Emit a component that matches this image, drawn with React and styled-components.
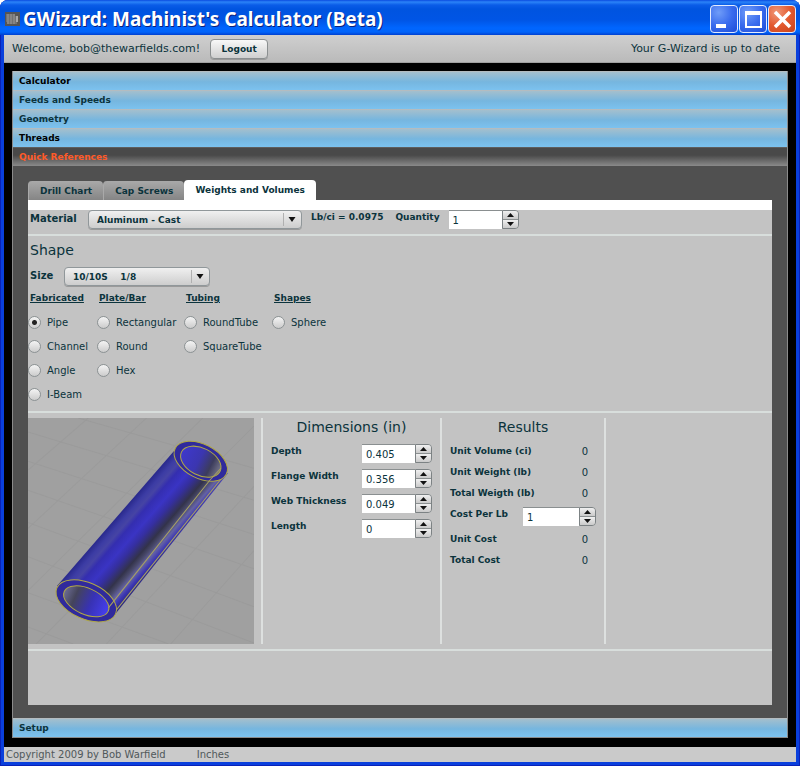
import React from "react";
import styled, { createGlobalStyle } from "styled-components";

const INK = "#0b333c";

const GlobalStyle = createGlobalStyle`
  *, *::before, *::after { box-sizing: border-box; }
  html, body { margin: 0; background: #fff; }
  body, button, input, select {
    font-family: "DejaVu Sans", Verdana, sans-serif;
    font-size: 10px;
    color: ${INK};
  }
  h2, h3, p { margin: 0; }
`;

const Window = styled.div`
  display: flex;
  flex-direction: column;
  min-height: 100vh;
  padding: 0 4px 4px;
  background: #0a3fdc;
  border-radius: 8px 8px 0 0;
  box-shadow: inset 1px 0 #0a22b8, inset -1px -1px #0a22b8;
`;

const TitleBar = styled.header`
  display: flex;
  align-items: center;
  height: 35px;
  margin: 0 -4px;
  padding: 3px 4px 0 5px;
  border-radius: 8px 8px 0 0;
  background: linear-gradient(#0a4be0 0, #2b83f8 2px, #0a5ce8 5px, #0054e0 9px, #0055e5 20px, #0066ff 28px, #0064fa 32px, #0040d0 35px);
`;

const TitleText = styled.h1`
  flex: 1;
  margin: 0 0 0 3px;
  font: bold 19px/24px "Trebuchet MS", "Noto Sans", sans-serif;
  color: #fff;
  text-shadow: 1px 1px #0a1f7c;
  white-space: nowrap;
`;

const CaptionButtons = styled.div`
  display: flex;
  gap: 1px;
`;

const CaptionButton = styled.button`
  display: flex;
  width: 28px;
  height: 28px;
  padding: 0;
  border: 1px solid #e4ecff;
  border-radius: 4px;
  background: ${(p) =>
    p.$close
      ? "radial-gradient(circle at 30% 25%, #f09878, #e35a30 50%, #c8421c)"
      : "radial-gradient(circle at 30% 25%, #6f9cf8, #3a6cee 50%, #1c4cd8)"};
  svg { display: block; width: 26px; height: 26px; }
`;

const AccountBar = styled.div`
  display: flex;
  align-items: center;
  height: 28px;
  padding: 0 16px 0 8px;
  background: linear-gradient(#cfcfcf, #bababa);
  border-bottom: 1px solid #a0a0a0;
  font-size: 11px;
`;

const LogoutButton = styled.button`
  height: 20px;
  width: 58px;
  margin-left: 10px;
  padding: 0;
  border: 1px solid #8b8f90;
  border-radius: 4px;
  background: linear-gradient(#f8f8f8, #cfcfcf);
  box-shadow: 0 1px #9a9a9a;
  font-size: 9px;
  font-weight: bold;
`;

const Status = styled.p`
  margin-left: auto;
`;

const Stage = styled.div`
  display: flex;
  flex: 1;
  padding: 8px 8px 9px;
  background: #000;
`;

const Accordion = styled.main`
  display: flex;
  flex: 1;
  flex-direction: column;
  min-width: 0;
  border: solid #8a8a8a;
  border-width: 0 1px 1px;
  background: #505050;
`;

const AccordionHeader = styled.button`
  display: block;
  width: 100%;
  height: 19px;
  padding: 0 6px;
  border: 0;
  border-top: 1px solid ${(p) => (p.$open ? "#5e5e5e" : "#b4bcc0")};
  background: ${(p) =>
    p.$open
      ? "linear-gradient(#494949 40%, #8a8a8a)"
      : "linear-gradient(#a4bfcd, #76b6df 55%, #7cc2ef)"};
  color: ${(p) => (p.$open ? "#ff5a28" : p.$strong ? "#000" : INK)};
  font-size: 9px;
  font-weight: bold;
  line-height: 18px;
  text-align: left;
`;

const AccordionBody = styled.section`
  display: flex;
  flex: 1;
  flex-direction: column;
  padding: 14px 15px 13px;
`;

const Tabs = styled.div`
  display: flex;
  align-items: flex-end;
`;

const Tab = styled.button`
  height: ${(p) => (p.$active ? 20 : 19)}px;
  padding: 0 11px;
  border: 0;
  border-left: ${(p) => (p.$active ? 0 : 1)}px solid #a9a9a9;
  border-radius: 4px 4px 0 0;
  background: ${(p) => (p.$active ? "#fff" : "linear-gradient(#a9a9a9, #858585)")};
  font-size: 9px;
  font-weight: bold;
  white-space: nowrap;
`;

const Panel = styled.div`
  flex: 1;
  border-top: 10px solid #fff;
  background: #c3c3c3;
`;

const MaterialRow = styled.div`
  display: flex;
  align-items: flex-start;
  height: 26px;
  padding-left: 2px;
  border-bottom: 2px solid #d8dedc;
`;

const BigLabel = styled.label`
  width: ${(p) => p.$width}px;
  font-size: 10px;
  font-weight: bold;
  line-height: 17px;
`;

const SmallLabel = styled.label`
  margin: ${(p) => p.$margin || 0};
  font-size: 9px;
  font-weight: bold;
  line-height: 15px;
  white-space: nowrap;
`;

const SelectBox = styled.span`
  position: relative;
  display: block;
  width: ${(p) => p.$width}px;
  height: 19px;
  svg {
    position: absolute;
    right: 0;
    top: 0;
    width: 20px;
    height: 19px;
    pointer-events: none;
  }
`;

const SelectField = styled.select`
  appearance: none;
  width: 100%;
  height: 19px;
  padding: 0 22px 0 8px;
  border: 1px solid #90979a;
  border-radius: 4px;
  background: linear-gradient(#f0f0f0, #cdcdcd);
  box-shadow: 0 1px #9a9a9a;
  font-size: 9px;
  font-weight: bold;
`;

const StepperBox = styled.span`
  display: flex;
  width: ${(p) => p.$width}px;
  height: 19px;
`;

const StepperInput = styled.input`
  flex: 1;
  min-width: 0;
  padding: 0 4px;
  border: 0;
  border-top: 1px solid #8a8f90;
  background: #fff;
`;

const StepperButtons = styled.span`
  display: flex;
  flex-direction: column;
  width: 17px;
  border: 1px solid #7c8284;
  border-radius: 0 4px 4px 0;
  overflow: hidden;
`;

const StepButton = styled.button`
  display: flex;
  flex: 1;
  align-items: center;
  justify-content: center;
  padding: 0;
  border: 0;
  background: linear-gradient(#f0f0f0, #cacaca);
  & + & { border-top: 1px solid #8a8f90; }
  svg { display: block; width: 7px; height: 4px; }
`;

const ShapeSection = styled.section`
  padding: 5px 2px 0;
  border-bottom: 2px solid #d8dedc;
`;

const SectionTitle = styled.h2`
  font-size: 14px;
  font-weight: normal;
  line-height: 18px;
`;

const SizeRow = styled.div`
  display: flex;
  padding-top: 8px;
`;

const ShapeColumns = styled.div`
  display: grid;
  grid-template-columns: 69px 87px 88px 1fr;
  padding: 5px 0;
`;

const ShapeColumn = styled.fieldset`
  min-width: 0;
  margin: 0;
  padding: 0;
  border: 0;
`;

const ShapeLegend = styled.legend`
  padding: 0 0 4px;
  font-size: 9px;
  font-weight: bold;
  line-height: 15px;
  text-decoration: underline;
`;

const ShapeOption = styled.label`
  display: flex;
  align-items: center;
  gap: 6px;
  height: 24px;
  margin-left: -2px;
  white-space: nowrap;
`;

const Radio = styled.input`
  appearance: none;
  width: 13px;
  height: 13px;
  margin: 0;
  border: 1px solid #8c9294;
  border-radius: 50%;
  background: linear-gradient(#f4f4f4, #cccccc);
  &:checked {
    background: radial-gradient(circle, #222 2px, transparent 3px), linear-gradient(#f4f4f4, #cccccc);
  }
`;

const Details = styled.div`
  display: grid;
  grid-template-columns: 233px 179px 164px 1fr;
  padding: 5px 0;
  border-bottom: 2px solid #d8dedc;
`;

const Preview = styled.figure`
  margin: 0;
  svg { display: block; width: 226px; height: 226px; }
`;

const DetailColumn = styled.section`
  display: flex;
  flex-direction: column;
  gap: 6px;
  padding: 0 8px;
  border-left: 2px solid #dde0df;
`;

const DetailTitle = styled(SectionTitle)`
  text-align: center;
  margin-bottom: 2px;
`;

const FieldRow = styled.div`
  display: flex;
  align-items: flex-start;
  justify-content: space-between;
`;

const ResultValue = styled.output`
  padding-right: 8px;
  line-height: 15px;
`;

const Footer = styled.footer`
  display: flex;
  gap: 31px;
  height: 15px;
  padding-left: 2px;
  background: #cacaca;
  color: #50585a;
  line-height: 15px;
`;

function Select({ id, value, width }) {
  return (
    <SelectBox $width={width}>
      <SelectField id={id} defaultValue={value}>
        <option>{value}</option>
      </SelectField>
      <svg viewBox="0 0 20 19" aria-hidden="true">
        <path d="M1.500 3v13" stroke="#b0b0b0" />
        <path d="M6.500 7h7l-3.500 5z" fill="#111" />
      </svg>
    </SelectBox>
  );
}

function Stepper({ id, value, width = 70 }) {
  return (
    <StepperBox $width={width}>
      <StepperInput id={id} defaultValue={value} inputMode="decimal" />
      <StepperButtons>
        <StepButton type="button" aria-label="Increase">
          <svg viewBox="0 0 7 4"><path d="M0 4l3.500-4L7 4z" fill="#111" /></svg>
        </StepButton>
        <StepButton type="button" aria-label="Decrease">
          <svg viewBox="0 0 7 4"><path d="M0 0h7L3.500 4z" fill="#111" /></svg>
        </StepButton>
      </StepperButtons>
    </StepperBox>
  );
}

function PipeDrawing() {
  return (
    <svg viewBox="0 0 225 225" role="img" aria-label="Pipe">
      <defs>
        <linearGradient id="body" gradientUnits="userSpaceOnUse" x1="29" y1="167" x2="75" y2="207">
          <stop offset="0" stopColor="#29298c" />
          <stop offset=".1" stopColor="#3c3ca4" />
          <stop offset=".18" stopColor="#4644a4" />
          <stop offset=".26" stopColor="#342eb0" />
          <stop offset=".4" stopColor="#3a34c4" />
          <stop offset=".52" stopColor="#352fa0" />
          <stop offset=".68" stopColor="#33334a" />
          <stop offset=".76" stopColor="#4a4a6c" />
          <stop offset=".84" stopColor="#6462a4" />
          <stop offset=".92" stopColor="#3c36b4" />
          <stop offset="1" stopColor="#2c2880" />
        </linearGradient>
        <linearGradient id="mouthTop">
          <stop offset="0" stopColor="#3e38cc" />
          <stop offset=".45" stopColor="#3b36b0" />
          <stop offset=".75" stopColor="#3c3c5c" />
          <stop offset="1" stopColor="#77778c" />
        </linearGradient>
        <linearGradient id="mouthBottom">
          <stop offset="0" stopColor="#6c6c94" />
          <stop offset=".25" stopColor="#44445a" />
          <stop offset=".6" stopColor="#3832b4" />
          <stop offset="1" stopColor="#463ff0" />
        </linearGradient>
      </defs>
      <rect width="225" height="225" fill="#a0a0a0" />
      <g stroke="#9b9b9b" strokeWidth="1" fill="none">
        <path d="M0 14L225 82M0 43L225 116M0 72L225 150M0 104L225 188M0 138L225 224M0 174L140 225M50 0L225 50M0 208L45 225" />
        <path d="M60 0L0 52M118 0L0 110M174 0L0 172M225 8L8 225M225 68L78 225M225 132L142 225" />
      </g>
      <path d="M29 167L146 32L199 55L88 194L60 202z" fill="url(#body)" />
      <ellipse cx="58" cy="182" rx="32" ry="18" transform="rotate(24 58 182)" fill="#302a9c" stroke="#b0a846" />
      <ellipse cx="58" cy="182.500" rx="24" ry="13" transform="rotate(24 58 182.500)" fill="url(#mouthBottom)" stroke="#b0a846" />
      <ellipse cx="172" cy="43" rx="28.500" ry="17" transform="rotate(27 172 43)" fill="#302a9c" stroke="#b0a846" />
      <ellipse cx="172" cy="43.500" rx="21.500" ry="13.500" transform="rotate(27 172 43.500)" fill="url(#mouthTop)" stroke="#b0a846" />
      <path d="M192 50L181 62L80 189M192 61L88 191" fill="none" stroke="#a8a260" />
    </svg>
  );
}

const shapeGroups = [
  { title: "Fabricated", options: ["Pipe", "Channel", "Angle", "I-Beam"] },
  { title: "Plate/Bar", options: ["Rectangular", "Round", "Hex"] },
  { title: "Tubing", options: ["RoundTube", "SquareTube"] },
  { title: "Shapes", options: ["Sphere"] },
];

const dimensions = [
  ["Depth", "0.405"],
  ["Flange Width", "0.356"],
  ["Web Thickness", "0.049"],
  ["Length", "0"],
];

function Result({ label }) {
  return (
    <FieldRow>
      <SmallLabel as="span">{label}</SmallLabel>
      <ResultValue aria-label={label}>0</ResultValue>
    </FieldRow>
  );
}

export default function App() {
  return (
    <>
      <GlobalStyle />
      <Window>
        <TitleBar>
          <svg width="15" height="14" viewBox="0 0 15 14" aria-hidden="true">
            <rect width="15" height="14" fill="#555" />
            <path d="M1 3h9M1 5h12M1 7h12M1 9h12M2 11h10M3 2v10M6 2v10M9 2v10" stroke="#aaa" strokeWidth=".7" />
            <path d="M12 4v6" stroke="#ddd" />
          </svg>
          <TitleText>GWizard: Machinist's Calculator (Beta)</TitleText>
          <CaptionButtons>
            <CaptionButton aria-label="Minimize">
              <svg viewBox="0 0 26 26"><path d="M5 18h10v4H5z" fill="#fff" /></svg>
            </CaptionButton>
            <CaptionButton aria-label="Maximize">
              <svg viewBox="0 0 26 26"><path d="M5 5h17v17H5zM7 9v11h13V9z" fill="#fff" fillRule="evenodd" /></svg>
            </CaptionButton>
            <CaptionButton $close aria-label="Close">
              <svg viewBox="0 0 26 26"><path d="M6 6l15 15M21 6L6 21" stroke="#fff" strokeWidth="3.500" /></svg>
            </CaptionButton>
          </CaptionButtons>
        </TitleBar>
        <AccountBar>
          <p>Welcome, bob@thewarfields.com!</p>
          <LogoutButton>Logout</LogoutButton>
          <Status>Your G-Wizard is up to date</Status>
        </AccountBar>
        <Stage>
          <Accordion>
            <AccordionHeader $strong>Calculator</AccordionHeader>
            <AccordionHeader>Feeds and Speeds</AccordionHeader>
            <AccordionHeader>Geometry</AccordionHeader>
            <AccordionHeader $strong>Threads</AccordionHeader>
            <AccordionHeader $open aria-expanded="true">Quick References</AccordionHeader>
            <AccordionBody>
              <Tabs role="tablist">
                <Tab role="tab">Drill Chart</Tab>
                <Tab role="tab">Cap Screws</Tab>
                <Tab role="tab" aria-selected="true" $active>Weights and Volumes</Tab>
              </Tabs>
              <Panel>
                <MaterialRow>
                  <BigLabel htmlFor="material" $width={58}>Material</BigLabel>
                  <Select id="material" value="Aluminum - Cast" width={214} />
                  <SmallLabel as="span" $margin="0 12px 0 9px">Lb/ci = 0.0975</SmallLabel>
                  <SmallLabel htmlFor="quantity" $margin="0 9px 0 0">Quantity</SmallLabel>
                  <Stepper id="quantity" value="1" />
                </MaterialRow>
                <ShapeSection>
                  <SectionTitle>Shape</SectionTitle>
                  <SizeRow>
                    <BigLabel htmlFor="size" $width={34}>Size</BigLabel>
                    <Select id="size" value={"10/10S\u00a0\u00a0\u00a0\u00a01/8"} width={146} />
                  </SizeRow>
                  <ShapeColumns>
                    {shapeGroups.map((group) => (
                      <ShapeColumn key={group.title}>
                        <ShapeLegend>{group.title}</ShapeLegend>
                        {group.options.map((name) => (
                          <ShapeOption key={name}>
                            <Radio type="radio" name="shape" defaultChecked={name === "Pipe"} />
                            {name}
                          </ShapeOption>
                        ))}
                      </ShapeColumn>
                    ))}
                  </ShapeColumns>
                </ShapeSection>
                <Details>
                  <Preview><PipeDrawing /></Preview>
                  <DetailColumn>
                    <DetailTitle>Dimensions (in)</DetailTitle>
                    {dimensions.map(([label, value]) => (
                      <FieldRow key={label}>
                        <SmallLabel htmlFor={label}>{label}</SmallLabel>
                        <Stepper id={label} value={value} />
                      </FieldRow>
                    ))}
                  </DetailColumn>
                  <DetailColumn>
                    <DetailTitle>Results</DetailTitle>
                    <Result label="Unit Volume (ci)" />
                    <Result label="Unit Weight (lb)" />
                    <Result label="Total Weigth (lb)" />
                    <FieldRow>
                      <SmallLabel htmlFor="cost">Cost Per Lb</SmallLabel>
                      <Stepper id="cost" value="1" width={73} />
                    </FieldRow>
                    <Result label="Unit Cost" />
                    <Result label="Total Cost" />
                  </DetailColumn>
                  <DetailColumn />
                </Details>
              </Panel>
            </AccordionBody>
            <AccordionHeader>Setup</AccordionHeader>
          </Accordion>
        </Stage>
        <Footer>
          <span>Copyright 2009 by Bob Warfield</span>
          <span>Inches</span>
        </Footer>
      </Window>
    </>
  );
}
